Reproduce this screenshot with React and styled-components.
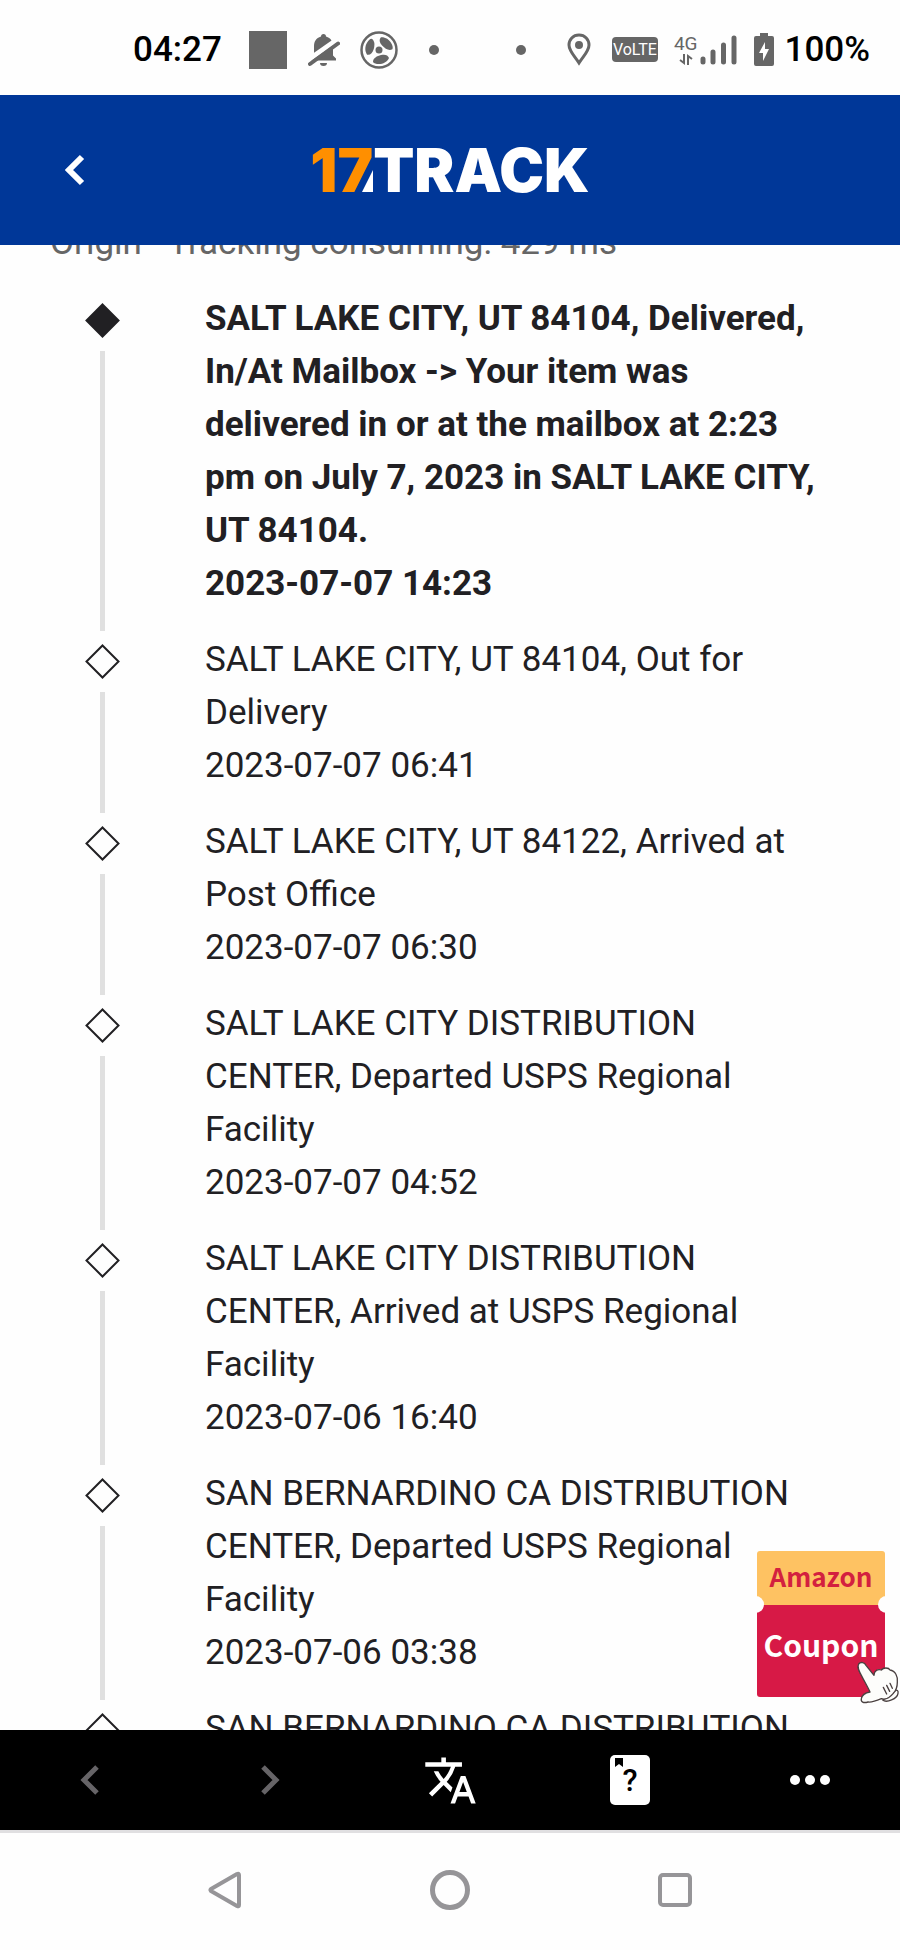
import React from "react";
import styled, { createGlobalStyle } from "styled-components";
import { MdTranslate } from "react-icons/md";

const GlobalStyle = createGlobalStyle`
  * { box-sizing: border-box; }
  body { margin: 0; background: #fefefe; font-family: Roboto, "Liberation Sans", sans-serif; }
  svg { display: block; }
`;

const Screen = styled.div`
  display: flex;
  flex-direction: column;
  height: 100vh;
  color: #212023;
`;

const StatusBar = styled.div`
  flex: none;
  display: flex;
  align-items: center;
  justify-content: space-between;
  height: 95px;
  padding: 4px 30px 0 133px;
  color: #000;
  font-size: 35px;
  font-weight: 500;
`;

const StatusGroup = styled.div`
  display: flex;
  align-items: center;
`;

const StatusIcon = styled.svg`
  flex: none;
  margin-left: ${(p) => p.$gap}px;
  color: #666;
`;

const Dot = styled.span`
  width: 10px;
  height: 10px;
  margin-left: ${(p) => p.$gap || 0}px;
  border-radius: 50%;
  background: #666;
`;

const Volte = styled.span`
  display: flex;
  align-items: center;
  justify-content: center;
  width: 46px;
  height: 25px;
  margin-left: 21px;
  border-radius: 4px;
  background: #666;
  color: #fff;
  font-size: 16px;
  font-weight: 400;
`;

const Network = styled.span`
  display: flex;
  flex-direction: column;
  align-items: center;
  margin-left: 16px;
  color: #666;
  font-size: 19px;
  line-height: 20px;
  font-weight: 400;
`;

const Percent = styled.span`
  margin-left: 11px;
`;

const Header = styled.header`
  flex: none;
  display: grid;
  grid-template-columns: 150px 1fr 150px;
  align-items: center;
  height: 150px;
  background: #003798;
  color: #fff;
`;

const IconButton = styled.button`
  display: flex;
  align-items: center;
  justify-content: center;
  flex: 1;
  height: 100%;
  padding: 0;
  border: 0;
  background: none;
  font-family: inherit;
  color: ${(p) => p.$color || "#fff"};
`;

const Logo = styled.h1`
  display: flex;
  justify-content: center;
  margin: 0;
  font-family: Inter, sans-serif;
  font-size: 60px;
  line-height: 60px;
  font-weight: 900;
`;

const LogoNumber = styled.span`
  position: relative;
  color: #ff8f00;
`;

const LogoAccent = styled.svg`
  position: absolute;
  right: 0;
  bottom: 8px;
`;

const Main = styled.main`
  position: relative;
  flex: 1;
  min-height: 0;
  overflow: hidden;
`;

const Origin = styled.p`
  margin: -29px 50px 0;
  color: #666;
  font-size: 35px;
  line-height: 53px;
`;

const Timeline = styled.ol`
  margin: 23px 0 0;
  padding: 0;
  list-style: none;
`;

const Event = styled.li`
  display: grid;
  grid-template-columns: 205px 1fr;
  padding-right: 72px;
  font-size: 35px;
  line-height: 53px;
  font-weight: ${(p) => (p.$latest ? 700 : 400)};
`;

const Track = styled.div`
  display: flex;
  flex-direction: column;
  align-items: center;
  padding: 11px 0 2px;
`;

const Line = styled.span`
  flex: 1;
  width: 5px;
  margin-top: 13px;
  background: #e0e0e0;
`;

const Details = styled.div`
  padding-bottom: 23px;
`;

const Text = styled.p`
  margin: 0;
`;

const Time = styled.time`
  display: block;
`;

const Coupon = styled.a`
  position: absolute;
  right: 15px;
  bottom: 33px;
  width: 128px;
  text-align: center;
  text-decoration: none;
  font-family: "Noto Sans CJK SC", sans-serif;
  font-weight: 700;
`;

const CouponTop = styled.span`
  display: block;
  height: 54px;
  border-radius: 3px 3px 0 0;
  background: #fec262;
  color: #d3203f;
  font-size: 26px;
  line-height: 50px;
`;

const CouponBody = styled.span`
  display: block;
  height: 92px;
  border-radius: 0 0 3px 3px;
  background: #d71946;
  color: #fff;
  font-size: 30px;
  line-height: 78px;
`;

const Notch = styled.span`
  position: absolute;
  top: 45px;
  ${(p) => p.$side}: -10px;
  width: 17px;
  height: 17px;
  border-radius: 50%;
  background: #fefefe;
`;

const Hand = styled.svg`
  position: absolute;
  right: -15px;
  bottom: -9px;
`;

const Toolbar = styled.nav`
  flex: none;
  display: flex;
  height: 100px;
  background: #000;
`;

const SystemNav = styled.nav`
  flex: none;
  display: flex;
  height: 120px;
  padding: 0 112px 3px;
  border-top: 3px solid #e0dfe1;
`;

const events = [
  {
    text: "SALT LAKE CITY, UT 84104, Delivered, In/At Mailbox -> Your item was delivered in or at the mailbox at 2:23 pm on July 7, 2023 in SALT LAKE CITY, UT 84104.",
    time: "2023-07-07 14:23",
  },
  { text: "SALT LAKE CITY, UT 84104, Out for Delivery", time: "2023-07-07 06:41" },
  { text: "SALT LAKE CITY, UT 84122, Arrived at Post Office", time: "2023-07-07 06:30" },
  { text: "SALT LAKE CITY DISTRIBUTION CENTER, Departed USPS Regional Facility", time: "2023-07-07 04:52" },
  { text: "SALT LAKE CITY DISTRIBUTION CENTER, Arrived at USPS Regional Facility", time: "2023-07-06 16:40" },
  { text: "SAN BERNARDINO CA DISTRIBUTION CENTER, Departed USPS Regional Facility", time: "2023-07-06 03:38" },
  { text: "SAN BERNARDINO CA DISTRIBUTION" },
];

function Chevron({ flip, weight }) {
  return (
    <svg width="20" height="32" viewBox="0 0 20 32" fill="none" stroke="currentColor" strokeWidth={weight}>
      <path d={flip ? "M3 3 L16 16 L3 29" : "M17 3 L4 16 L17 29"} />
    </svg>
  );
}

function Diamond({ filled }) {
  return (
    <svg width="35" height="35" viewBox="0 0 35 35" fill={filled ? "#212023" : "none"} stroke="#212023" strokeWidth="2">
      <path d="M17.5 1.5 L33.5 17.5 L17.5 33.5 L1.5 17.5 Z" />
    </svg>
  );
}

export default function App() {
  return (
    <Screen>
      <GlobalStyle />
      <StatusBar>
        <StatusGroup>
          <span>04:27</span>
          <StatusIcon $gap={27} width="38" height="38">
            <rect width="38" height="38" fill="currentColor" />
          </StatusIcon>
          <StatusIcon $gap={21} width="32" height="34" viewBox="0 0 32 34">
            <path
              fill="currentColor"
              d="M13 3.5a2.5 2.5 0 0 1 5 0c5 1.500 7 5 7 10v9l3 3v2H3v-2l3-3v-9c0-5 2-8.500 7-10zM12 30h7a3.500 3 0 0 1-7 0z"
            />
            <path d="M0 27 L30 6" stroke="#fefefe" strokeWidth="5" />
            <path d="M2 31 L30 10.5" stroke="currentColor" strokeWidth="4" strokeLinecap="round" />
          </StatusIcon>
          <StatusIcon $gap={20} width="38" height="38" viewBox="0 0 38 38">
            <circle cx="19" cy="19" r="17.5" fill="none" stroke="currentColor" strokeWidth="2.5" />
            <circle cx="19" cy="19" r="3.5" fill="currentColor" />
            <g fill="currentColor">
              <path id="blade" d="M13 31 C13 27 17 25 21 24 C25 23 28 24 29 27 C27 31 23 33 19 33 C16 33 14 32.5 13 31 Z" />
              <use href="#blade" transform="rotate(120 19 19)" />
              <use href="#blade" transform="rotate(240 19 19)" />
            </g>
          </StatusIcon>
          <Dot $gap={31} />
        </StatusGroup>
        <StatusGroup>
          <Dot />
          <StatusIcon $gap={41} width="24" height="33" viewBox="0 0 24 33">
            <path
              d="M12 2 C6 2 2 6.500 2 12 C2 18 7.500 23 12 30 C16.500 23 22 18 22 12 C22 6.500 18 2 12 2 Z"
              fill="none"
              stroke="currentColor"
              strokeWidth="3"
            />
            <circle cx="12" cy="12" r="4" fill="currentColor" />
          </StatusIcon>
          <Volte>VoLTE</Volte>
          <Network>
            4G
            <svg width="14" height="11" viewBox="0 0 14 11" fill="none" stroke="currentColor" strokeWidth="2">
              <path d="M5 0 V9 L1 6 M9 11 V2 L13 5" />
            </svg>
          </Network>
          <StatusIcon $gap={2} width="37" height="32" viewBox="0 0 37 32" stroke="currentColor" strokeWidth="5" strokeLinecap="round">
            <path d="M3 25 V28 M13 18 V28 M23.5 11 V28 M34 4 V28" />
          </StatusIcon>
          <StatusIcon $gap={17} width="20" height="33" viewBox="0 0 20 33">
            <path
              fill="currentColor"
              fillRule="evenodd"
              d="M6 0h8v3h4a2 2 0 0 1 2 2v26a2 2 0 0 1-2 2H2a2 2 0 0 1-2-2V5a2 2 0 0 1 2-2h4zM11 9L5 20h4v8l6-12h-4z"
            />
          </StatusIcon>
          <Percent>100%</Percent>
        </StatusGroup>
      </StatusBar>

      <Header>
        <IconButton aria-label="Back">
          <Chevron weight={6} />
        </IconButton>
        <Logo>
          <LogoNumber>
            17
            <LogoAccent width="11" height="22" viewBox="0 0 11 22">
              <path d="M11 0 V22 H0 Z" fill="#fff" />
            </LogoAccent>
          </LogoNumber>
          TRACK
        </Logo>
      </Header>

      <Main>
        <Origin>Origin - Tracking consuming: 429 ms</Origin>
        <Timeline>
          {events.map((event, i) => (
            <Event key={i} $latest={i === 0}>
              <Track>
                <Diamond filled={i === 0} />
                <Line />
              </Track>
              <Details>
                <Text>{event.text}</Text>
                {event.time && <Time>{event.time}</Time>}
              </Details>
            </Event>
          ))}
        </Timeline>
        <Coupon href="#coupon">
          <CouponTop>Amazon</CouponTop>
          <CouponBody>Coupon</CouponBody>
          <Notch $side="left" />
          <Notch $side="right" />
          <Hand width="44" height="46" viewBox="348 392 132 138" fill="#fdfdfb" stroke="#4a4040" strokeWidth="4" strokeLinejoin="round" strokeLinecap="round">
            <path d="M428 512 C440 522 472 508 474 492 C476 484 470 480 466 484 L440 506 Z" />
            <path d="M356 404 C362 396 374 400 378 408 L402 438 C402 424 414 418 424 422 C430 414 446 414 450 422 C466 424 474 442 472 458 C472 474 468 484 460 492 C450 504 436 512 424 508 C410 514 396 520 384 518 C370 522 362 518 364 508 C366 496 378 490 390 488 C382 470 372 454 366 442 C358 428 350 414 356 404 Z" />
            <path d="M430 474 L440 494 M440 468 L449 486 M450 462 L457 477" fill="none" />
          </Hand>
        </Coupon>
      </Main>

      <Toolbar>
        <IconButton aria-label="Previous page" $color="#666467">
          <Chevron weight={5} />
        </IconButton>
        <IconButton aria-label="Next page" $color="#666467">
          <Chevron flip weight={5} />
        </IconButton>
        <IconButton aria-label="Translate">
          <MdTranslate size={55} />
        </IconButton>
        <IconButton aria-label="Help">
          <svg width="40" height="50" viewBox="0 0 40 50">
            <rect width="40" height="50" rx="5" fill="#fff" />
            <path d="M5 3h8v9l-4-3-4 3z" fill="#000" />
            <text x="20" y="36" textAnchor="middle" fontSize="31" fontWeight="500" fill="#000">?</text>
          </svg>
        </IconButton>
        <IconButton aria-label="More">
          <svg width="40" height="10" viewBox="0 0 40 10" fill="currentColor">
            <circle cx="5" cy="5" r="5" />
            <circle cx="20" cy="5" r="5" />
            <circle cx="35" cy="5" r="5" />
          </svg>
        </IconButton>
      </Toolbar>

      <SystemNav>
        <IconButton aria-label="System back" $color="#969598">
          <svg width="36" height="40" viewBox="0 0 36 40" fill="none" stroke="currentColor" strokeWidth="4" strokeLinejoin="round">
            <path d="M4 19 Q3 20 4 21 L30 36 Q32 37 32 35 V5 Q32 3 30 4 Z" />
          </svg>
        </IconButton>
        <IconButton aria-label="Home" $color="#969598">
          <svg width="40" height="40" viewBox="0 0 40 40" fill="none" stroke="currentColor" strokeWidth="5">
            <circle cx="20" cy="20" r="17.5" />
          </svg>
        </IconButton>
        <IconButton aria-label="Recent apps" $color="#969598">
          <svg width="36" height="36" viewBox="0 0 36 36" fill="none" stroke="currentColor" strokeWidth="4">
            <rect x="3" y="3" width="30" height="30" rx="3" />
          </svg>
        </IconButton>
      </SystemNav>
    </Screen>
  );
}
